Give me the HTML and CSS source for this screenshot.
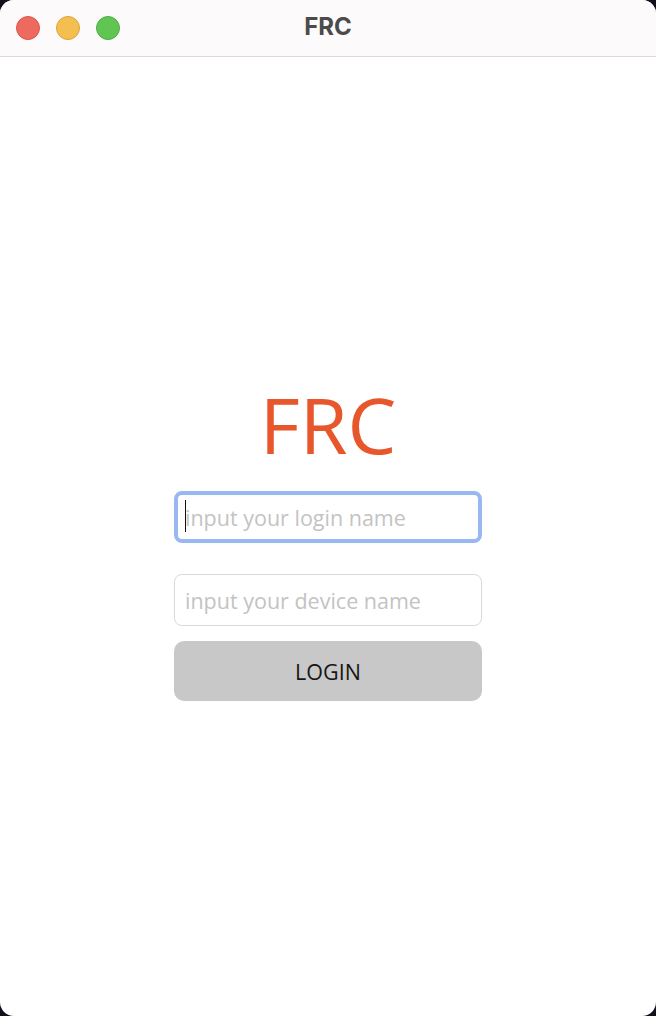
FILE: index.html
```html
<!DOCTYPE html>
<html lang="en">
<head>
<meta charset="utf-8">
<title>FRC</title>
<link rel="stylesheet" href="styles.css">
</head>
<body>
<div class="window">
  <header class="titlebar">
    <div class="lights">
      <span class="light red"></span>
      <span class="light yellow"></span>
      <span class="light green"></span>
    </div>
    <div class="title">FRC</div>
  </header>
  <main class="content">
    <form class="login">
      <h1 class="brand">FRC</h1>
      <span class="field focused">
        <input class="input input-focus" type="text" placeholder="input your login name">
        <span class="caret"></span>
      </span>
      <span class="field">
        <input class="input" type="text" placeholder="input your device name">
      </span>
      <button class="btn" type="button">LOGIN</button>
    </form>
  </main>
</div>
</body>
</html>
```
FILE: styles.css
```css
html, body {
  margin: 0;
  padding: 0;
  background: #10111a;
}
.window {
  width: 656px;
  height: 1016px;
  background: #ffffff;
  border-radius: 14px;
  overflow: hidden;
  display: flex;
  flex-direction: column;
}
.titlebar {
  position: relative;
  height: 56px;
  flex: none;
  background: #fcfafb;
  border-bottom: 1px solid #dadada;
  display: flex;
  align-items: center;
}
.lights {
  display: flex;
  gap: 16px;
  padding-left: 16px;
}
.light {
  width: 24px;
  height: 24px;
  border-radius: 50%;
  box-sizing: border-box;
}
.red { background: #ee6a5f; border: 1px solid #d9574d; }
.yellow { background: #f5bf4f; border: 1px solid #d9a43c; }
.green { background: #61c554; border: 1px solid #4fae44; }
.title {
  position: absolute;
  left: 0;
  right: 0;
  top: 0;
  height: 56px;
  line-height: 54px;
  text-align: center;
  font-family: Inter, "Liberation Sans", sans-serif;
  font-weight: 700;
  font-size: 24px;
  color: #4b4b4b;
  pointer-events: none;
}
.content {
  flex: 1;
  display: flex;
  justify-content: center;
  padding-top: 317px;
}
.login {
  width: 308px;
  display: flex;
  flex-direction: column;
  align-items: stretch;
}
.brand {
  margin: 0;
  text-align: center;
  font-family: "Open Sans", sans-serif;
  font-weight: 400;
  font-size: 77.5px;
  line-height: 100px;
  color: #e8562b;
}
.field {
  position: relative;
  display: block;
}
.field.focused {
  margin-top: 17px;
  margin-bottom: 31px;
}
.input {
  display: block;
  width: 100%;
  box-sizing: border-box;
  height: 52px;
  border: 1px solid #d8d8d8;
  border-radius: 8px;
  padding: 0 10px;
  font-family: "Open Sans", sans-serif;
  font-size: 21.5px;
  color: #222;
  background: #fff;
  outline: none;
}
.input::placeholder {
  color: #c3c3c3;
}
.input-focus {
  border: 4px solid #99b8f2;
  padding: 0 7px;
}
.caret {
  position: absolute;
  left: 11px;
  top: 9px;
  width: 1px;
  height: 32px;
  background: #111;
}
.btn {
  margin-top: 15px;
  height: 60px;
  border: none;
  border-radius: 10px;
  background: #c8c8c8;
  font-family: "Open Sans", sans-serif;
  font-size: 21.5px;
  color: #161616;
  cursor: pointer;
}
```
